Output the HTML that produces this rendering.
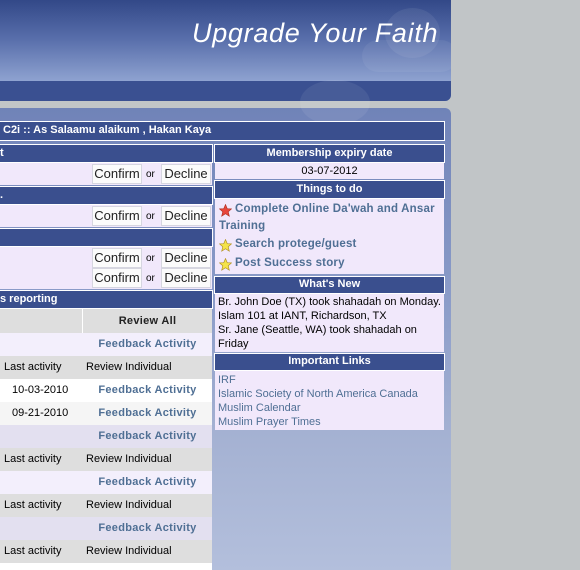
<!DOCTYPE html>
<html style="width:580px;height:570px;overflow:hidden"><head><style>
*{margin:0;padding:0;box-sizing:border-box}
body{width:580px;height:570px;background:#c1c5c7;position:relative;overflow:hidden;font-family:"Liberation Sans",sans-serif;font-size:11px;color:#000}
.a{position:absolute}
.hd{position:absolute;background:#3a4f8e;color:#fff;font-weight:bold;font-size:11px;line-height:17px;border:1px solid #fff}
.c{text-align:center}
.row{position:absolute;left:0;width:212px;height:23px;line-height:23px;font-size:11px}
.fb{color:#4f6f94;font-weight:bold;position:absolute;left:83px;width:129px;text-align:center;letter-spacing:.3px}
.la{position:absolute;left:4px}
.ri{position:absolute;left:86px}
.btn{position:absolute;background:#fbfbfb;border:1px solid #d6d6e0;font-size:13px;line-height:18px;height:20px;text-align:center;color:#222}
.or{position:absolute;font-size:10px;line-height:20px}
.star{display:inline-block;width:13px;height:13px;vertical-align:-5px;margin-right:3px}
</style></head><body>
<div class="a" style="left:0;top:0;width:451px;height:101px;border-radius:0 0 6px 0;overflow:hidden;background:linear-gradient(#324888 0%,#5a70ac 40%,#8ea2d0 80%,#8ea2d0 100%)">
 <div class="a" style="left:0;top:81px;width:451px;height:20px;background:#3a5091"></div>
 <div class="a" style="left:385px;top:8px;width:55px;height:50px;border-radius:50%;background:rgba(255,255,255,.07)"></div>
 <div class="a" style="left:362px;top:40px;width:95px;height:32px;border-radius:16px;background:rgba(255,255,255,.06)"></div>
 <div class="a" style="left:192px;top:18px;font-size:27px;font-style:italic;color:#fff;letter-spacing:.7px">Upgrade Your Faith</div>
</div>
<div class="a" style="left:0;top:108px;width:451px;height:462px;border-radius:0 6px 0 0;background:linear-gradient(#7083b8 0%,#8a9bc8 40%,#a4b1d2 70%,#b3bfdc 100%)"></div>
<div class="a" style="left:300px;top:80px;width:70px;height:45px;border-radius:50%;background:rgba(255,255,255,.07)"></div>
<div class="hd" style="left:-1px;top:121px;width:446px;height:20px;padding-left:3px;line-height:17px">C2i :: As Salaamu alaikum , Hakan Kaya</div>

<div class="hd" style="left:-1px;top:144px;width:214px;height:19px;padding-left:0">t</div>
<div class="a" style="left:0;top:163px;width:212px;height:22px;background:#f1e8fb"></div>
<div class="btn" style="left:92px;top:164px;width:50px">Confirm</div><div class="or" style="left:146px;top:165px">or</div><div class="btn" style="left:161px;top:164px;width:50px">Decline</div>
<div class="hd" style="left:-1px;top:186px;width:214px;height:19px">.</div>
<div class="a" style="left:0;top:205px;width:212px;height:22px;background:#f1e8fb"></div>
<div class="btn" style="left:92px;top:206px;width:50px">Confirm</div><div class="or" style="left:146px;top:207px">or</div><div class="btn" style="left:161px;top:206px;width:50px">Decline</div>
<div class="hd" style="left:-1px;top:228px;width:214px;height:19px"></div>
<div class="a" style="left:0;top:247px;width:212px;height:42px;background:#f1e8fb"></div>
<div class="btn" style="left:92px;top:248px;width:50px">Confirm</div><div class="or" style="left:146px;top:249px">or</div><div class="btn" style="left:161px;top:248px;width:50px">Decline</div>
<div class="btn" style="left:92px;top:268px;width:50px">Confirm</div><div class="or" style="left:146px;top:269px">or</div><div class="btn" style="left:161px;top:268px;width:50px">Decline</div>
<div class="hd" style="left:-1px;top:290px;width:214px;height:19px">s reporting</div>

<div class="row" style="top:309px;height:24px;background:#dedede"><div class="a" style="left:82px;top:0;width:1px;height:24px;background:#fff"></div><div class="fb" style="color:#222;line-height:24px">Review All</div></div>
<div class="row" style="top:333px;background:#f3effc"><div class="fb">Feedback Activity</div></div>
<div class="row" style="top:356px;background:#dedede"><span class="la">Last activity</span><span class="ri">Review Individual</span></div>
<div class="row" style="top:379px;background:#fff"><span class="a" style="left:12px">10-03-2010</span><div class="fb">Feedback Activity</div></div>
<div class="row" style="top:402px;background:#f5f5f5"><span class="a" style="left:12px">09-21-2010</span><div class="fb">Feedback Activity</div></div>
<div class="row" style="top:425px;background:#e3e0f0"><div class="fb">Feedback Activity</div></div>
<div class="row" style="top:448px;background:#dedede"><span class="la">Last activity</span><span class="ri">Review Individual</span></div>
<div class="row" style="top:471px;background:#f3effc"><div class="fb">Feedback Activity</div></div>
<div class="row" style="top:494px;background:#dedede"><span class="la">Last activity</span><span class="ri">Review Individual</span></div>
<div class="row" style="top:517px;background:#e3e0f0"><div class="fb">Feedback Activity</div></div>
<div class="row" style="top:540px;background:#dedede"><span class="la">Last activity</span><span class="ri">Review Individual</span></div>
<div class="row" style="top:563px;height:7px;background:#fff"></div>

<div class="hd c" style="left:214px;top:144px;width:231px;height:19px">Membership expiry date</div>
<div class="a c" style="left:215px;top:163px;width:229px;height:16px;background:#f1e8fb;line-height:16px">03-07-2012</div>
<div class="hd c" style="left:214px;top:180px;width:231px;height:19px">Things to do</div>
<div class="a" style="left:215px;top:199px;width:229px;height:75px;background:#f1e8fb;color:#4f6f94;font-weight:bold;font-size:11.5px;letter-spacing:.2px;line-height:17px;padding:2px 3px 0 4px">
<div><svg class="star" viewBox="0 0 12 12"><polygon points="6,0.5 7.6,4.3 11.6,4.5 8.5,7.1 9.5,11.2 6,9 2.5,11.2 3.5,7.1 0.4,4.5 4.4,4.3" fill="#e8463c" stroke="#b03020" stroke-width=".6"/></svg>Complete Online Da'wah and Ansar Training</div>
<div style="margin-top:1px"><svg class="star" viewBox="0 0 12 12"><polygon points="6,0.5 7.6,4.3 11.6,4.5 8.5,7.1 9.5,11.2 6,9 2.5,11.2 3.5,7.1 0.4,4.5 4.4,4.3" fill="#f4e34a" stroke="#b09020" stroke-width=".6"/></svg>Search protege/guest</div>
<div style="margin-top:2px"><svg class="star" viewBox="0 0 12 12"><polygon points="6,0.5 7.6,4.3 11.6,4.5 8.5,7.1 9.5,11.2 6,9 2.5,11.2 3.5,7.1 0.4,4.5 4.4,4.3" fill="#f4e34a" stroke="#b09020" stroke-width=".6"/></svg>Post Success story</div>
</div>
<div class="hd c" style="left:214px;top:276px;width:231px;height:18px;line-height:15px">What's New</div>
<div class="a" style="left:215px;top:294px;width:229px;height:58px;background:#f1e8fb;line-height:14px;padding:1px 3px">Br. John Doe (TX) took shahadah on Monday. Islam 101 at IANT, Richardson, TX<br>Sr. Jane (Seattle, WA) took shahadah on Friday</div>
<div class="hd c" style="left:214px;top:353px;width:231px;height:18px;line-height:15px">Important Links</div>
<div class="a" style="left:215px;top:371px;width:229px;height:59px;background:#f1e8fb;line-height:14px;padding:2px 3px;color:#4f6f94">IRF<br>Islamic Society of North America Canada<br>Muslim Calendar<br>Muslim Prayer Times</div>
</body></html>
